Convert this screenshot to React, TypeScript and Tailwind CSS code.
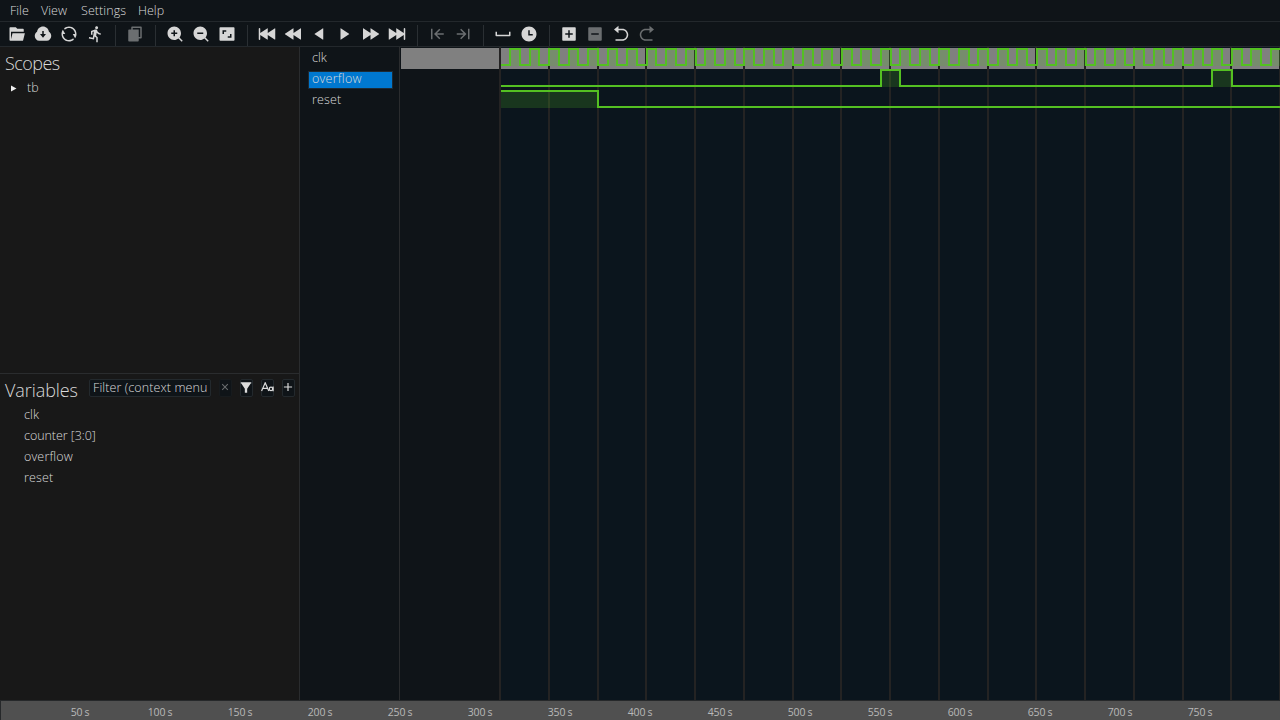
import * as React from "react";
import { RiFolderOpenFill, RiDownloadCloudFill, RiRefreshLine, RiRunLine, RiFileCopyFill, RiZoomInFill, RiZoomOutFill, RiAspectRatioFill, RiRewindStartFill, RiRewindFill, RiPlayReverseFill, RiPlayFill, RiSpeedFill, RiForwardEndFill, RiContractLeftLine, RiContractRightLine, RiSpace, RiTimeFill, RiAddBoxFill, RiCheckboxIndeterminateFill, RiArrowGoBackFill, RiArrowGoForwardFill, RiFilterFill, RiAddFill, RiCloseFill } from "react-icons/ri";

type Icon = React.ComponentType<{ className?: string }>;
type Tool = { icon: Icon; dim?: boolean; nudge?: string };

const GROUPS: Tool[][] = [
  [{ icon: RiFolderOpenFill }, { icon: RiDownloadCloudFill }, { icon: RiRefreshLine }, { icon: RiRunLine, nudge: "translate-x-[0.5px]" }],
  [{ icon: RiFileCopyFill, dim: true }],
  [{ icon: RiZoomInFill }, { icon: RiZoomOutFill }, { icon: RiAspectRatioFill }],
  [{ icon: RiRewindStartFill }, { icon: RiRewindFill, nudge: "translate-x-[0.5px]" }, { icon: RiPlayReverseFill, nudge: "translate-x-[1.25px]" }, { icon: RiPlayFill, nudge: "-translate-x-[1.5px]" }, { icon: RiSpeedFill, nudge: "-translate-x-[0.5px]" }, { icon: RiForwardEndFill }],
  [{ icon: RiContractLeftLine, dim: true }, { icon: RiContractRightLine, dim: true, nudge: "translate-x-[0.5px]" }],
  [{ icon: RiSpace }, { icon: RiTimeFill }],
  [{ icon: RiAddBoxFill }, { icon: RiCheckboxIndeterminateFill, dim: true }, { icon: RiArrowGoBackFill, nudge: "translate-x-[0.5px]" }, { icon: RiArrowGoForwardFill, dim: true, nudge: "-translate-x-[0.5px]" }],
];

const LEFT = 400;
const gridAt = (k: number) => Math.round(500 + 48.75 * k) - LEFT;
const edge = (k: number) => Math.round(500.48 + 9.7512 * k) - LEFT;

function Waves() {
  const grid = Array.from({ length: 17 }, (_, k) => gridAt(k));
  const highs = Array.from({ length: 40 }, (_, k) => [edge(2 * k + 1), edge(2 * k + 2)]);
  const clk = "M101 18" + highs.map(([a, b]) => `H${a}V2H${b}V18`).join("") + "H880";
  return (
    <svg className="block" width="880" height="653" viewBox="0 0 880 653">
      <rect x="100" y="0" width="780" height="653" fill="#0b151d" />
      {grid.map((x) => <rect key={x} x={x - 1} y="0" width="2" height="653" fill="#242323" />)}
      <rect x="1" y="1" width="98" height="21" fill="#808080" />
      <rect x="101" y="1" width="779" height="21" fill="#808080" />
      {grid.slice(1).map((x) => <rect key={x} x={x - 1} y="1" width="2" height="21" fill="#242323" />)}
      {highs.map(([a, b]) => <rect key={a} x={a} y="2" width={b - a} height="17" fill="#54c022" fillOpacity=".2" />)}
      <g fill="#54c022" fillOpacity=".2">
        <rect x="481" y="23" width="19" height="17" />
        <rect x="812" y="23" width="20" height="17" />
        <rect x="101" y="44" width="97" height="17" />
      </g>
      <g fill="none" stroke="#54c022" strokeWidth="2">
        <path d={clk} />
        <path d="M101 39H481V23H500V39H812V23H832V39H880" />
        <path d="M101 44H198V60H880" />
      </g>
    </svg>
  );
}

function MatchCase() {
  return (
    <svg className="shrink-0" width="13" height="10" viewBox="0 0 13 10" fill="none" stroke="currentColor" strokeWidth="1.2">
      <path d="M.6 9 4.2.8 7.8 9M1.9 6.3H6.5" />
      <circle cx="10" cy="6.9" r="1.7" />
      <path d="M12.1 4.6V9.2" />
    </svg>
  );
}

function Mini({ children, dim }: { children: React.ReactNode; dim?: boolean }) {
  return <span className={`ml-2 flex h-[18px] w-[13px] shrink-0 items-center justify-center rounded-[2px] border bg-[#0f1418] pb-[3px] pr-px ${dim ? "border-[#171b1e] text-[#6a6d6f]" : "border-[#23292d] text-[#dcdcdc]"}`}>{children}</span>;
}

const ROW = "flex h-[21px] items-center";

export default function App() {
  return (
    <div className="flex h-[720px] w-[1280px] flex-col overflow-hidden bg-[#0f1418] font-['Open_Sans',sans-serif] text-[12.5px] font-light text-[#dadada]">
      <nav className="flex h-[22px] shrink-0 items-center border-b border-[#23282c] pl-[10px] pt-[2px]">
        <span className="w-[31px]">File</span>
        <span className="w-[40px]">View</span>
        <span className="w-[57px] tracking-[0.08px]">Settings</span>
        <span>Help</span>
      </nav>
      <div className="flex h-[25px] shrink-0 border-b border-[#23282c] pl-1">
        {GROUPS.map((g, i) => (
          <div key={i} className={`mt-[3px] flex ${i ? "-ml-0.5 border-l border-[#2a2f33] pl-[6px]" : ""}`}>
            {g.map(({ icon: I, dim, nudge }, j) => (
              <span key={j} className={`flex h-[18px] w-[26px] items-center justify-center ${dim ? "text-[#6b6e70]" : "text-[#d6d6d6]"} ${nudge ?? ""}`}><I className="size-[18px] shrink-0" /></span>
            ))}
            <span className="w-[9px]" />
          </div>
        ))}
      </div>
      <div className="flex h-[653px] shrink-0">
        <aside className="flex w-[300px] shrink-0 flex-col border-r border-[#2a2c2e] bg-[#181818]">
          <section className="h-[327px] border-b border-[#2a2c2e]">
            <h2 className="flex h-[30px] items-center pl-[5px] pt-[2px] text-[18px] tracking-[-0.55px]">Scopes</h2>
            <div className={`${ROW} pl-[10px] pt-[2px]`}>
              <svg className="mr-[10px]" width="7" height="7" viewBox="0 0 7 7"><path d="M1 .5 6.5 3.5 1 6.5Z" fill="#f0f0f0" /></svg>tb
            </div>
          </section>
          <section>
            <div className="flex h-[30px] items-center pl-[5px]">
              <h2 className="w-[84px] pt-[2px] text-[18px] tracking-[-0.08px]">Variables</h2>
              <div className="mt-[-2px] flex h-[18px] w-[122px] shrink-0 items-center overflow-hidden whitespace-nowrap rounded-[2px] border border-[#23292d] bg-[#0f1418] pl-[3px] tracking-[0.1px]">Filter (context menu</div>
              <div className="mt-[-2px] flex">
                <Mini dim><RiCloseFill className="size-3 shrink-0" /></Mini>
                <Mini><RiFilterFill className="size-[14px] shrink-0" /></Mini>
                <Mini><MatchCase /></Mini>
                <Mini><RiAddFill className="size-[14px] shrink-0" /></Mini>
              </div>
            </div>
            <div className="pl-6 pt-px">
              {["clk", "counter [3:0]", "overflow", "reset"].map((t) => <div key={t} className={`${ROW} ${t === "counter [3:0]" ? "tracking-[-0.06px]" : "tracking-[0.15px]"}`}>{t}</div>)}
            </div>
          </section>
        </aside>
        <div className="w-[100px] shrink-0 border-r border-[#2a2c2e] px-2 pt-px">
          <div className={`${ROW} pl-1`}>clk</div>
          <div className={ROW}><span className="flex h-[18px] w-[85px] shrink-0 items-center border border-[#1d2a34] bg-[#0078d0] pl-[3px] tracking-[0.25px]">overflow</span></div>
          <div className={`${ROW} pl-1 tracking-[0.15px]`}>reset</div>
        </div>
        <Waves />
      </div>
      <div className="flex h-[20px] shrink-0 border-l border-t border-[#26282a] bg-[#505050] pl-[39px] text-[10.5px] font-normal tracking-[-0.1px] text-[#b8b8b8]">
        {Array.from({ length: 15 }, (_, i) => <span key={i} className="flex w-[80px] items-center justify-center pt-[5px] [word-spacing:-0.6px]">{(i + 1) * 50} s</span>)}
      </div>
    </div>
  );
}
